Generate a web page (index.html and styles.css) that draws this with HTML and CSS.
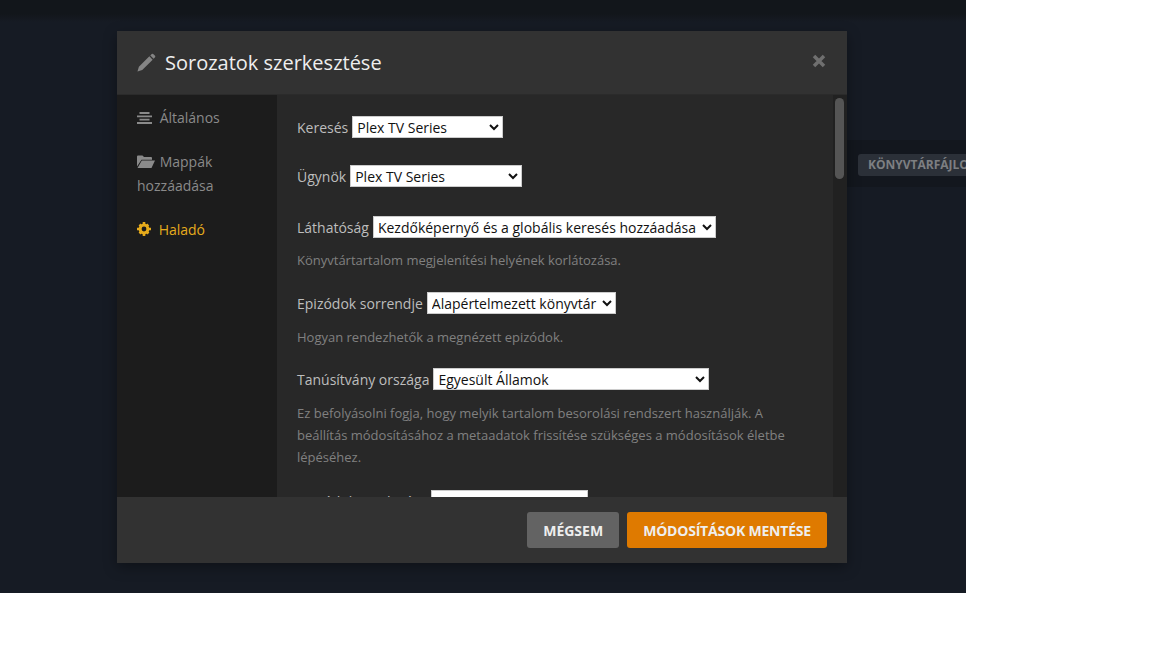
FILE: index.html
```html
<!DOCTYPE html>
<html lang="hu">
<head>
  <meta charset="UTF-8" />
  <title>Sorozatok szerkesztése</title>
  <link rel="stylesheet" href="styles.css">
</head>
<body>
  <div class="stage">
    <div class="modal">
      <header class="modal__header">
        <svg class="modal__pencil" viewBox="0 0 20 20" width="19" height="19">
          <path d="M0.5 19.500 L2 14.500 L13 3.500 L16.500 7 L5.500 18 Z M14 2.500 L15.500 1 Q16.200 0.400 17 1 L19 3 Q19.600 3.800 19 4.500 L17.500 6 Z" />
        </svg>
        <h1>Sorozatok szerkesztése</h1>
        <svg class="modal__close" viewBox="0 0 14 14" width="14" height="14">
          <path d="M2 2 L12 12 M12 2 L2 12" />
        </svg>
      </header>

      <div class="modal__body">
        <nav class="side">
          <a class="side__item">
            <svg class="side__icon" viewBox="0 0 15 12" width="15" height="12">
              <path d="M2.500 0h10v2h-10z M0 3.400h15v1.800H0z M2.500 6.700h10v1.800h-10z M0 10h15v2H0z" />
            </svg>
            Általános
          </a>
          <a class="side__item">
            <svg class="side__icon side__icon--folder" viewBox="0 0 18 13" width="18" height="13">
              <path d="M0 1.500 Q0 0.500 1 0.500H5.500L7 2H14Q15 2 15 3V4.800H4.500L0 11.500Z M4.800 5.400H18L14.500 13H0.500Z" />
            </svg>
            Mappák hozzáadása
          </a>
          <a class="side__item side__item--active">
            <svg class="side__icon" viewBox="0 0 14 14" width="14" height="14">
              <circle class="side__cog" cx="7" cy="7" r="3.900" />
              <path d="M5.700 0h2.600v3h-2.600z M5.700 11h2.600v3h-2.600z M0 5.700h3v2.600H0z M11 5.700h3v2.600h-3z M1.600 3.400l1.800-1.800 2 2-1.800 1.800z M8.600 10.400l1.800-1.800 2 2-1.800 1.800z M10.400 1.600l1.800 1.800-2 2-1.800-1.800z M3.600 8.600l1.800 1.800-2 2-1.800-1.800z" />
            </svg>
            Haladó
          </a>
        </nav>

        <div class="form">
          <div class="row row--first">
            <label>Keresés</label>
            <select class="w-search"><option>Plex TV Series</option></select>
          </div>
          <div class="row row--agent">
            <label>Ügynök</label>
            <select class="w-agent"><option>Plex TV Series</option></select>
          </div>
          <div class="row">
            <label>Láthatóság</label>
            <select class="w-visible"><option>Kezdőképernyő és a globális keresés hozzáadása</option></select>
          </div>
          <p class="hint">Könyvtártartalom megjelenítési helyének korlátozása.</p>
          <div class="row">
            <label>Epizódok sorrendje</label>
            <select class="w-order"><option>Alapértelmezett könyvtár</option></select>
          </div>
          <p class="hint hint--low">Hogyan rendezhetők a megnézett epizódok.</p>
          <div class="row">
            <label>Tanúsítvány országa</label>
            <select class="w-country"><option>Egyesült Államok</option></select>
          </div>
          <p class="hint hint--low">Ez befolyásolni fogja, hogy melyik tartalom besorolási rendszert használják. A beállítás módosításához a metaadatok frissítése szükséges a módosítások életbe lépéséhez.</p>
          <div class="row row--last">
            <label>Epizódok rendezése</label>
            <select class="w-last"><option>Alapértelmezett</option></select>
          </div>
        </div>

        <div class="scroll"><div class="scroll__thumb"></div></div>
      </div>

      <footer class="modal__footer">
        <button class="btn btn--grey">MÉGSEM</button>
        <button class="btn btn--orange">MÓDOSÍTÁSOK MENTÉSE</button>
      </footer>
    </div>

    <span class="chip">KÖNYVTÁRFÁJLOK</span>
  </div>
</body>
</html>
```

FILE: styles.css
```css
body {
  margin: 0;
  background-color: #fff;
  font-family: 'Open Sans', sans-serif;
}

.stage {
  display: flex;
  align-items: flex-start;
  width: 966px;
  height: 593px;
  padding: 31px 0 0 117px;
  box-sizing: border-box;
  overflow: hidden;
  background:
    linear-gradient(#13171e, #13171e) right 0 top 140px / 119px 47px no-repeat,
    linear-gradient(#12161b 0, #12161b 14px, #161b24 22px, #161b24 100%);
}

.modal {
  display: flex;
  flex-direction: column;
  flex: none;
  width: 730px;
  height: 532px;
  border-radius: 2px;
  background-color: #282828;
  box-shadow: 0 4px 14px rgba(0, 0, 0, 0.35);
}

.modal__header {
  display: flex;
  align-items: center;
  flex: none;
  height: 64px;
  padding: 0 20px;
  box-sizing: border-box;
  background-color: #323232;
  border-bottom: 1px solid #2b2b2b;
}

.modal__header h1 {
  margin: 0 0 0 9px;
  font-size: 20px;
  font-weight: 400;
  color: #eee;
}

.modal__pencil {
  fill: #858585;
}

.modal__close {
  margin: -3px 1px 0 auto;
  fill: none;
  stroke: #6f6f6f;
  stroke-width: 3.5;
}

.modal__body {
  display: flex;
  flex: 1;
  min-height: 0;
  overflow: hidden;
}

.side {
  flex: none;
  width: 160px;
  padding: 11px 20px;
  box-sizing: border-box;
  background-color: #1c1c1c;
}

.side__item {
  display: block;
  margin-bottom: 20px;
  font-size: 14px;
  line-height: 24px;
  color: #8a8a8a;
}

.side__item--active {
  color: #e6ab1c;
}

.side__icon {
  margin-right: 4px;
  fill: currentColor;
  vertical-align: -1px;
}

.side__icon--folder {
  margin-right: 1px;
}

.side__cog {
  fill: none;
  stroke: currentColor;
  stroke-width: 3;
}

.form {
  flex: 1;
  min-width: 0;
  padding: 21px 20px 0;
}

.row {
  display: flex;
  align-items: center;
  gap: 4px;
  height: 22px;
  font-size: 14px;
  color: #bdbdbd;
}

.row--first {
  margin-bottom: 27px;
}

.row--agent {
  margin-bottom: 29px;
}

.row--last {
  margin-top: 22px;
}

.row select {
  flex: none;
  height: 22px;
  padding: 0;
  border: 1px solid #ccc;
  border-radius: 0;
  background-color: #fff;
  color: #111;
  font-family: 'Open Sans', sans-serif;
  font-size: 14px;
}

.w-search { width: 151px; }
.w-agent { width: 172px; }
.w-visible { width: 343px; }
.w-order { width: 189px; }
.w-country { width: 276px; }

.row .w-last {
  width: 157px;
  height: 30px;
  margin-top: 8px;
  padding-top: 6px;
}

.hint {
  margin: 11px 0 21px;
  font-size: 13px;
  line-height: 22px;
  color: #808080;
}

.hint--low {
  margin: 12px 0 20px;
}

.scroll {
  flex: none;
  width: 14px;
  padding: 3px 3px 0 2px;
  box-sizing: border-box;
  background-color: #212121;
}

.scroll__thumb {
  height: 81px;
  border-radius: 5px;
  background-color: #555;
}

.modal__footer {
  display: flex;
  justify-content: flex-end;
  align-items: center;
  gap: 8px;
  flex: none;
  height: 66px;
  padding: 0 20px;
  box-sizing: border-box;
  background-color: #323232;
}

.btn {
  height: 36px;
  padding: 0 16px;
  border: none;
  border-radius: 3px;
  font-family: 'Open Sans', sans-serif;
  font-size: 14px;
  font-weight: 700;
  color: #eee;
}

.btn--grey {
  background-color: #636363;
}

.btn--orange {
  letter-spacing: -0.2px;
  background-color: #df7a00;
}

.chip {
  flex: none;
  margin: 123px 0 0 11px;
  padding: 0 10px;
  font-size: 12px;
  font-weight: 700;
  line-height: 22px;
  white-space: nowrap;
  border-radius: 3px;
  background-color: #2b3038;
  color: #7d7f82;
}
```
